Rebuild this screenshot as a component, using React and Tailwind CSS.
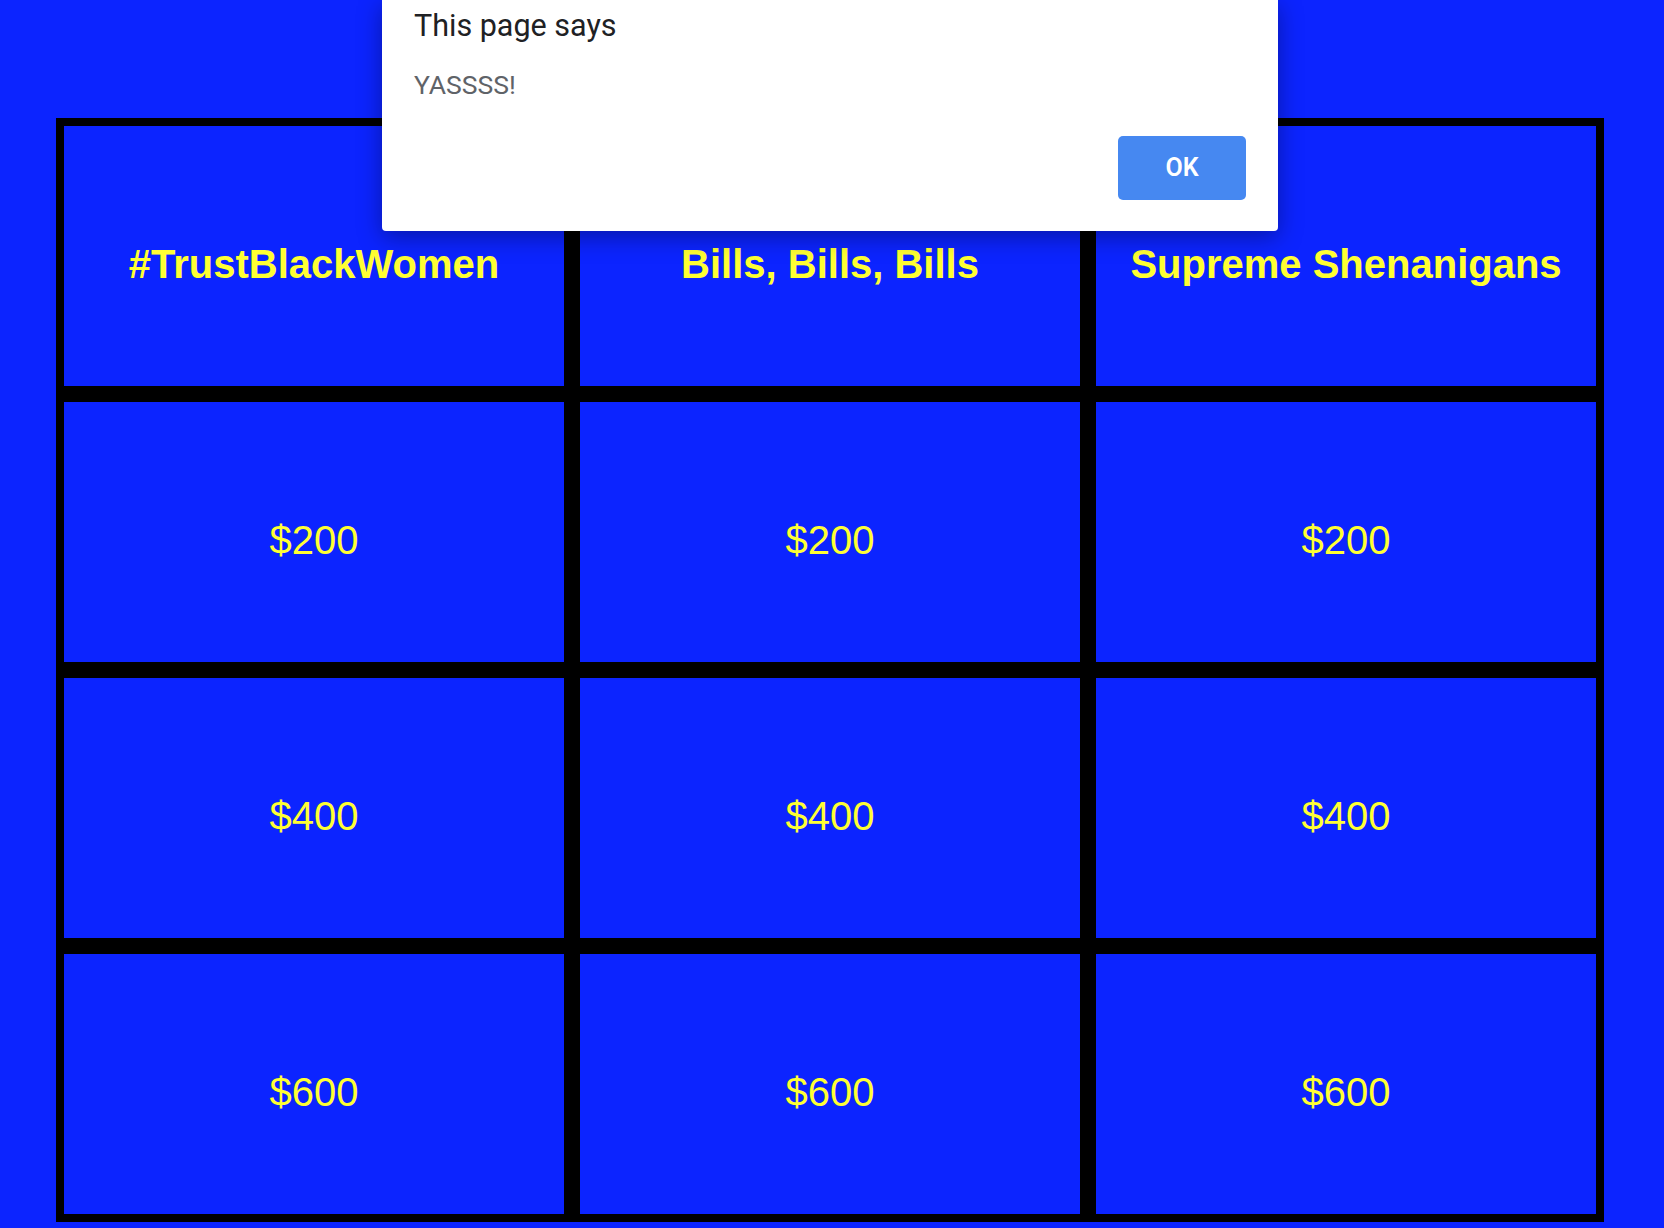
import React from "react";

const headers = ["#TrustBlackWomen", "Bills, Bills, Bills", "Supreme Shenanigans"];
const values = ["$200", "$400", "$600"];

export default function App() {
  return (
    <div className="relative w-[1664px] h-[1228px] overflow-hidden bg-[#0c24ff]" style={{ fontFamily: '"Liberation Sans", Arial, sans-serif' }}>
      <div className="ml-[56px] pt-[118px] w-[1548px]">
        <div className="grid grid-cols-3">
          {headers.map((h) => (
            <div key={h} className="h-[276px] border-8 border-black flex items-center justify-center pt-[16px] text-[40px] font-bold text-[#ffff33] leading-[46px] whitespace-nowrap">
              {h}
            </div>
          ))}
          {values.map((v) =>
            headers.map((h) => (
              <div key={v + h} className="h-[276px] border-8 border-black flex items-center justify-center pt-[16px] text-[40px] text-[#ffff33] leading-[46px]">
                {v}
              </div>
            ))
          )}
        </div>
      </div>

      <div
        className="absolute left-[382px] top-0 w-[896px] h-[231px] bg-white rounded-b-[4px] shadow-[0_6px_24px_rgba(0,0,0,0.35)] px-[32px] flex flex-col"
        style={{ fontFamily: 'Roboto, "Noto Sans", sans-serif' }}
      >
        <div className="mt-[9px] text-[30.5px] leading-[34px] text-[#202124]">This page says</div>
        <div className="mt-[27px] text-[26.5px] leading-[30px] text-[#5f6368]">YASSSS!</div>
        <div className="mt-[36px] flex justify-end">
          <button className="w-[128px] h-[64px] rounded-[5px] bg-[#4688f1] text-white text-[25px] font-semibold flex items-center justify-center">
            OK
          </button>
        </div>
      </div>
    </div>
  );
}
